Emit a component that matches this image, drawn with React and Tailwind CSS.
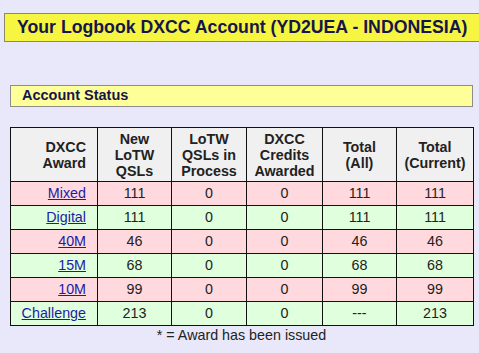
export default function App() {
  const rows = [
    { award: "Mixed", n: "111", p: "0", c: "0", all: "111", cur: "111", bg: "bg-[#ffd9de]" },
    { award: "Digital", n: "111", p: "0", c: "0", all: "111", cur: "111", bg: "bg-[#e0ffdd]" },
    { award: "40M", n: "46", p: "0", c: "0", all: "46", cur: "46", bg: "bg-[#ffd9de]" },
    { award: "15M", n: "68", p: "0", c: "0", all: "68", cur: "68", bg: "bg-[#e0ffdd]" },
    { award: "10M", n: "99", p: "0", c: "0", all: "99", cur: "99", bg: "bg-[#ffd9de]" },
    { award: "Challenge", n: "213", p: "0", c: "0", all: "---", cur: "213", bg: "bg-[#e0ffdd]" },
  ];
  const cell = "border border-[#111] text-center h-[24px] p-0";
  return (
    <div className="w-[479px] h-[353px] overflow-hidden bg-[#e8e8fa] text-[#222] font-['Liberation_Sans',Arial,sans-serif]">
      <div className="pt-[13px] pl-[4px]">
        <div className="w-[490px] h-[29px] bg-[#f5f542] border border-[#8a8a6a] pl-[12px] flex items-center text-[17.7px] font-bold text-[#16164a] whitespace-nowrap">
          Your Logbook DXCC Account (YD2UEA - INDONESIA)
        </div>
      </div>
      <div className="mt-[43px] ml-[10px] w-[463px] h-[22px] bg-[#ffff99] border border-[#8c8c8c] pl-[11px] flex items-center text-[14.5px] font-bold text-[#16164a]">
        Account Status
      </div>
      <div className="mt-[20px] ml-[10px] w-[463px]">
        <table className="w-[463px] border-collapse text-[14.3px] table-fixed">
          <colgroup>
            <col className="w-[87px]" />
            <col className="w-[74px]" />
            <col className="w-[75px]" />
            <col className="w-[76px]" />
            <col className="w-[74px]" />
            <col className="w-[77px]" />
          </colgroup>
          <thead>
            <tr className="bg-[#f0f0f0] font-bold leading-[16px] h-[54px]">
              <th className="border border-[#111] text-right pr-[11px]">DXCC<br />Award</th>
              <th className="border border-[#111]">New<br />LoTW<br />QSLs</th>
              <th className="border border-[#111]">LoTW<br />QSLs in<br />Process</th>
              <th className="border border-[#111]">DXCC<br />Credits<br />Awarded</th>
              <th className="border border-[#111]">Total<br />(All)</th>
              <th className="border border-[#111]">Total<br />(Current)</th>
            </tr>
          </thead>
          <tbody>
            {rows.map((r) => (
              <tr key={r.award} className={r.bg}>
                <td className="border border-[#111] text-right pr-[11px] h-[24px] p-0">
                  <a href="#" className="text-[#1c1ca8] underline">{r.award}</a>
                </td>
                <td className={cell}>{r.n}</td>
                <td className={cell}>{r.p}</td>
                <td className={cell}>{r.c}</td>
                <td className={cell}>{r.all}</td>
                <td className={cell}>{r.cur}</td>
              </tr>
            ))}
          </tbody>
        </table>
        <div className="text-center text-[14.3px] leading-[16px] mt-[1px]">* = Award has been issued</div>
      </div>
    </div>
  );
}
